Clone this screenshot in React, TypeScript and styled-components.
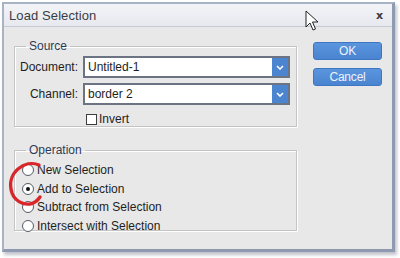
import React from 'react';
import styled, { createGlobalStyle } from 'styled-components';

const GlobalStyle = createGlobalStyle`
  html, body {
    margin: 0;
    padding: 0;
    background: #ffffff;
  }
  body {
    font-family: 'Liberation Sans', Arial, sans-serif;
    font-size: 12px;
    color: #1e1e1e;
  }
`;

// Page holding the dialog (white margin around)
const Page = styled.div`
  width: 400px;
  height: 258px;
  padding: 2px 0 0 2px;
  box-sizing: border-box;
  position: relative;
  overflow: hidden;
`;

// Dialog frame
const Window = styled.div`
  width: 393px;
  height: 250px;
  box-sizing: border-box;
  border: 2px solid #a9b3c6;
  border-right: 3px solid #8f9ab0;
  border-bottom: 3px solid #8f9ab0;
  background: #e8e8e8;
  box-shadow: 2px 3px 3px rgba(120, 125, 140, 0.45);
  display: flex;
  flex-direction: column;
`;

const TitleBar = styled.div`
  height: 22px;
  flex: none;
  display: flex;
  align-items: center;
  justify-content: space-between;
  padding: 0 9px 0 5px;
  background: linear-gradient(#f3f4f7, #e6e9ef);
  border-bottom: 1px solid #c5cbd6;
`;

const Title = styled.span`
  font-size: 13px;
  color: #3a3d44;
  letter-spacing: 0.1px;
`;

const Close = styled.span`
  font-family: 'DejaVu Sans', sans-serif;
  font-size: 11px;
  font-weight: bold;
  color: #3a3a3a;
`;

const Body = styled.div`
  flex: 1;
  display: flex;
  padding: 12px 0 0 10px;
  gap: 16px;
`;

const LeftColumn = styled.div`
  display: flex;
  flex-direction: column;
  gap: 16px;
  width: 283px;
`;

// Etched group box
const Group = styled.fieldset<{ $height: number }>`
  margin: 0;
  height: ${(p) => p.$height}px;
  box-sizing: border-box;
  border: 1px solid #c4c4c4;
  box-shadow: inset 1px 1px 0 #ffffff, 1px 1px 0 #ffffff;
  padding: 0;
  min-width: 0;
`;

const Legend = styled.legend`
  margin-left: 11px;
  padding: 0 3px;
  color: #2f3a55;
  font-size: 12px;
  line-height: 14px;
`;

const SourceGrid = styled.div`
  display: grid;
  grid-template-columns: 63px 207px;
  column-gap: 5px;
  row-gap: 5px;
  align-items: center;
  padding: 3px 0 0 0;
`;

const FieldLabel = styled.label`
  text-align: right;
  font-size: 12px;
`;

const Select = styled.div`
  height: 22px;
  box-sizing: border-box;
  border: 2px solid #6c7382;
  background: #ffffff;
  display: flex;
  align-items: center;
  justify-content: space-between;
  padding-left: 3px;
`;

const SelectText = styled.span`
  font-size: 12px;
`;

const DropButton = styled.span`
  width: 16px;
  height: 18px;
  background: #4b84cf;
  display: flex;
  align-items: center;
  justify-content: center;
`;

const CheckRow = styled.div`
  grid-column: 2;
  display: flex;
  align-items: center;
  gap: 2px;
  padding-left: 3px;
  margin-top: 2px;
`;

const CheckBox = styled.span`
  width: 11px;
  height: 11px;
  box-sizing: border-box;
  border: 1px solid #3d3d3d;
  background: #ffffff;
`;

const RadioList = styled.div`
  display: flex;
  flex-direction: column;
  gap: 4.7px;
  padding: 6px 0 0 7px;
`;

const RadioRow = styled.div`
  display: flex;
  align-items: center;
  gap: 3px;
  height: 14px;
`;

const Radio = styled.span<{ $checked?: boolean }>`
  width: 12px;
  height: 12px;
  box-sizing: border-box;
  border-radius: 50%;
  border: 1px solid #555b66;
  background: #ffffff;
  display: flex;
  align-items: center;
  justify-content: center;

  &::after {
    content: '';
    width: 4px;
    height: 4px;
    border-radius: 50%;
    background: ${(p) => (p.$checked ? '#111111' : 'transparent')};
  }
`;

const ButtonColumn = styled.div`
  display: flex;
  flex-direction: column;
  gap: 8px;
  padding-top: 3px;
`;

const Button = styled.button`
  width: 69px;
  height: 18px;
  padding: 0;
  border: 1px solid #3f76c2;
  border-radius: 3px;
  background: linear-gradient(#5b95de, #4a84d0);
  color: #eef3fb;
  font-family: 'Liberation Sans', Arial, sans-serif;
  font-size: 12px;
  letter-spacing: -0.2px;
`;

// Hand-drawn red annotation around the selected option
const Annotation = styled.svg`
  position: absolute;
  left: 6px;
  top: 160px;
  pointer-events: none;
`;

const Cursor = styled.svg`
  position: absolute;
  left: 305px;
  top: 10px;
  pointer-events: none;
`;

const Chevron = () => (
  <svg width="8" height="5" viewBox="0 0 8 5">
    <path d="M1 1 L4 4 L7 1" fill="none" stroke="#ffffff" strokeWidth="1.6" />
  </svg>
);

const options = [
  { label: 'New Selection', checked: false },
  { label: 'Add to Selection', checked: true },
  { label: 'Subtract from Selection', checked: false },
  { label: 'Intersect with Selection', checked: false },
];

const App: React.FC = () => {
  return (
    <Page>
      <GlobalStyle />
      <Window>
        <TitleBar>
          <Title>Load Selection</Title>
          <Close>x</Close>
        </TitleBar>
        <Body>
          <LeftColumn>
            <Group $height={88}>
              <Legend>Source</Legend>
              <SourceGrid>
                <FieldLabel>Document:</FieldLabel>
                <Select>
                  <SelectText>Untitled-1</SelectText>
                  <DropButton><Chevron /></DropButton>
                </Select>
                <FieldLabel>Channel:</FieldLabel>
                <Select>
                  <SelectText>border 2</SelectText>
                  <DropButton><Chevron /></DropButton>
                </Select>
                <CheckRow>
                  <CheckBox />
                  <span>Invert</span>
                </CheckRow>
              </SourceGrid>
            </Group>
            <Group $height={88}>
              <Legend>Operation</Legend>
              <RadioList>
                {options.map((o) => (
                  <RadioRow key={o.label}>
                    <Radio $checked={o.checked} />
                    <span>{o.label}</span>
                  </RadioRow>
                ))}
              </RadioList>
            </Group>
          </LeftColumn>
          <ButtonColumn>
            <Button>OK</Button>
            <Button>Cancel</Button>
          </ButtonColumn>
        </Body>
      </Window>
      <Annotation width="40" height="50" viewBox="0 0 40 50">
        <path
          d="M33 5 C26 2 18 4 12 9 C5 15 3 24 6 33 C9 41 17 45 24 44 C29 43 32 40 34 37"
          fill="none"
          stroke="#d9262a"
          strokeWidth="3.4"
          strokeLinecap="round"
        />
      </Annotation>
      <Cursor width="14" height="22" viewBox="0 0 14 22">
        <path
          d="M1 1 L1 17 L5 13 L8 20 L10.5 19 L7.5 12 L13 12 Z"
          fill="#ffffff"
          stroke="#222222"
          strokeWidth="1"
          strokeLinejoin="round"
        />
      </Cursor>
    </Page>
  );
};

export default App;
